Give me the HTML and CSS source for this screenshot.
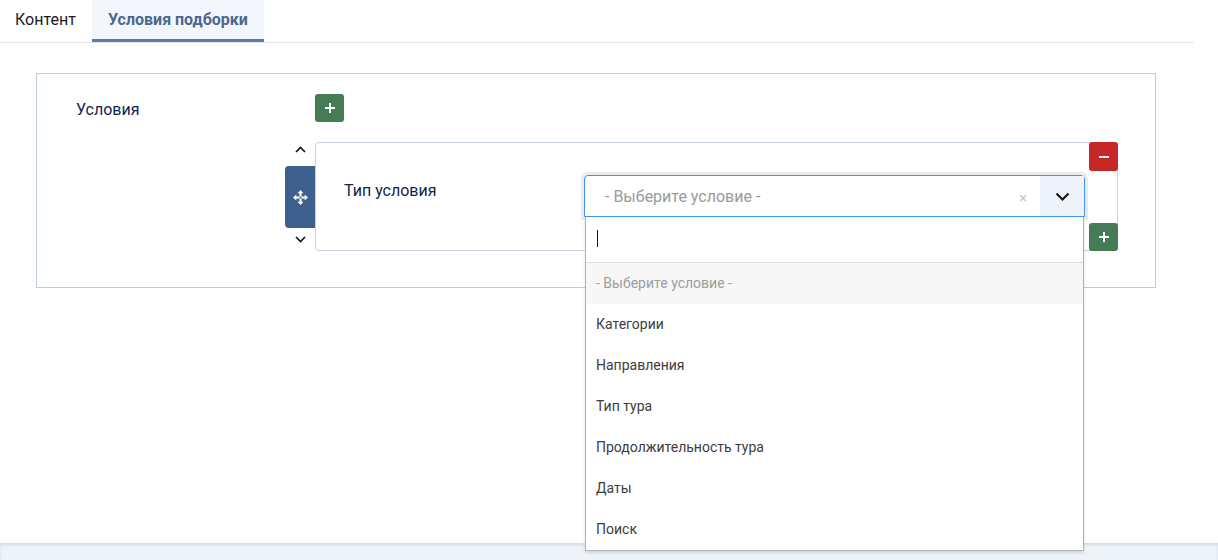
FILE: index.html
```html
<!DOCTYPE html>
<html lang="ru">
  <head>
    <meta charset="UTF-8" />
    <title>Условия подборки</title>
    <link rel="stylesheet" href="styles.css">
  </head>
  <body>
    <div class="page">
      <div class="tabs">
        <div class="tab">Контент</div>
        <div class="tab active">Условия подборки</div>
      </div>

      <div class="box">
        <div class="field-row">
          <div class="field-label">Условия</div>
          <button class="btn btn-green">
            <svg width="12" height="12" viewBox="0 0 12 12"><path d="M6 1v10M1 6h10" stroke="#fff" stroke-width="2"/></svg>
          </button>
        </div>

        <div class="cond-row">
          <div class="cond-ctrl">
            <div class="chev up">
              <svg width="11" height="7" viewBox="0 0 11 7"><path d="M1 6l4.5-4.5L10 6" fill="none" stroke="#111" stroke-width="1.6"/></svg>
            </div>
            <div class="handle">
              <svg width="15" height="15" viewBox="0 0 15 15"><path d="M7.5 0l3 3.3H8.6v3.3h-2.2V3.3H4.5zM7.5 15l3-3.3H8.6V8.4h-2.2v3.3H4.5zM0 7.5l3.3-3v1.9h3.3v2.2H3.3v1.9zM15 7.5l-3.3-3v1.9H8.4v2.2h3.3v1.9z" fill="#fff"/></svg>
            </div>
            <div class="chev">
              <svg width="11" height="7" viewBox="0 0 11 7"><path d="M1 1l4.5 4.5L10 1" fill="none" stroke="#111" stroke-width="1.6"/></svg>
            </div>
          </div>

          <div class="card">
            <div class="card-body">
              <div class="card-label">Тип условия</div>
              <div class="select-wrap">
                <div class="select">
                  <span class="select-text">- Выберите условие -</span>
                  <span class="select-clear">×</span>
                  <span class="select-arrow">
                    <svg width="15" height="9" viewBox="0 0 15 9"><path d="M1.5 1.5l6 6 6-6" fill="none" stroke="#111" stroke-width="2"/></svg>
                  </span>
                </div>
                <div class="dropdown">
                  <div class="search"><span class="caret"></span></div>
                  <div class="opt placeholder">- Выберите условие -</div>
                  <div class="opt">Категории</div>
                  <div class="opt">Направления</div>
                  <div class="opt">Тип тура</div>
                  <div class="opt">Продолжительность тура</div>
                  <div class="opt">Даты</div>
                  <div class="opt">Поиск</div>
                </div>
              </div>
            </div>
            <div class="card-actions">
              <button class="btn btn-red">
                <svg width="12" height="12" viewBox="0 0 12 12"><path d="M1 6h10" stroke="#fff" stroke-width="2"/></svg>
              </button>
              <button class="btn btn-green">
                <svg width="12" height="12" viewBox="0 0 12 12"><path d="M6 1v10M1 6h10" stroke="#fff" stroke-width="2"/></svg>
              </button>
            </div>
          </div>
        </div>
      </div>
    </div>
    <div class="footer-band"></div>
  </body>
</html>
```

FILE: styles.css
```css
html,
body {
  margin: 0;
  height: 560px;
  overflow: hidden;
  background: #fff;
  font-family: Roboto, "Liberation Sans", Arial, sans-serif;
}
.page {
  position: relative;
  z-index: 1;
  background: #fff;
  height: 543px;
}
.footer-band {
  height: 17px;
  background: #eef2f9;
  box-shadow: inset 0 2px 3px rgba(150, 165, 195, 0.3);
}
.tabs {
  display: flex;
  width: 1194px;
  border-bottom: 1px solid #dbe4ef;
  height: 42px;
}
.tab {
  padding: 0 15px 0 15px;
  width: 62px;
  line-height: 39px;
  font-size: 16px;
  color: #1b1b1b;
  border-bottom: 3px solid transparent;
}
.tab.active {
  padding: 0 16px;
  width: 140px;
  background: #f3f6fa;
  color: #4a6890;
  font-weight: bold;
  border-bottom-color: #5b7aa5;
}
.box {
  margin: 30px 0 0 36px;
  width: 1118px;
  height: 213px;
  border: 1px solid #c0cde0;
}
.field-row {
  display: flex;
  align-items: center;
  padding-top: 20px;
}
.field-label {
  width: 239px;
  padding-left: 39px;
  padding-top: 2px;
  font-size: 16px;
  color: #0f2550;
}
.btn {
  width: 29px;
  height: 28px;
  border: none;
  border-radius: 3px;
  padding: 0;
  display: flex;
  align-items: center;
  justify-content: center;
}
.btn-green {
  background: #457c55;
}
.btn-red {
  background: #c62828;
  height: 29px;
}
.cond-row {
  display: flex;
  margin-top: 20px;
  padding-left: 248px;
}
.cond-ctrl {
  width: 31px;
  display: flex;
  flex-direction: column;
}
.chev {
  height: 23px;
  display: flex;
  align-items: center;
  justify-content: center;
}
.chev.up {
  height: 24px;
  align-items: flex-start;
  padding-top: 4px;
  box-sizing: border-box;
}
.handle {
  height: 62px;
  background: #3d5f8e;
  border-radius: 4px 0 0 4px;
  display: flex;
  align-items: center;
  justify-content: center;
}
.card {
  width: 801px;
  height: 107px;
  margin-left: -1px;
  border: 1px solid #c5d0e3;
  border-radius: 4px;
  display: flex;
  justify-content: space-between;
}
.card-body {
  display: flex;
  padding: 32px 0 0 28px;
}
.card-label {
  width: 240px;
  padding-top: 6px;
  font-size: 16px;
  color: #0f2550;
}
.select-wrap {
  position: relative;
}
.select {
  width: 499px;
  height: 40px;
  border: 1px solid #3a93f5;
  border-radius: 4px 4px 0 0;
  box-shadow: 0 0 0 3px #ebebeb;
  display: flex;
  align-items: center;
}
.select-text {
  flex: 1;
  padding-left: 20px;
  font-size: 16px;
  color: #9a9a9a;
}
.select-clear {
  color: #c8c8c8;
  font-size: 15px;
  width: 16px;
  padding-top: 3px;
}
.select-arrow {
  width: 44px;
  height: 40px;
  margin-left: 5px;
  background: #eef3fb;
  display: flex;
  align-items: center;
  justify-content: center;
}
.dropdown {
  position: absolute;
  left: 1px;
  top: 42px;
  width: 497px;
  background: #fff;
  border: 1px solid #b3b3b3;
  border-top: none;
  box-shadow: 0 2px 3px rgba(0, 0, 0, 0.12);
  z-index: 2;
}
.search {
  height: 45px;
  border-bottom: 1px solid #dddddd;
  position: relative;
}
.caret {
  position: absolute;
  left: 11px;
  top: 13px;
  width: 1px;
  height: 17px;
  background: #111;
}
.opt {
  height: 41px;
  line-height: 41px;
  padding-left: 10px;
  font-size: 14px;
  color: #3d3d3d;
}
.opt.placeholder {
  background: #f7f7f7;
  color: #9d9d9d;
}
.card-actions {
  display: flex;
  flex-direction: column;
  justify-content: space-between;
  margin: -1px -1px -1px 0;
}
```
